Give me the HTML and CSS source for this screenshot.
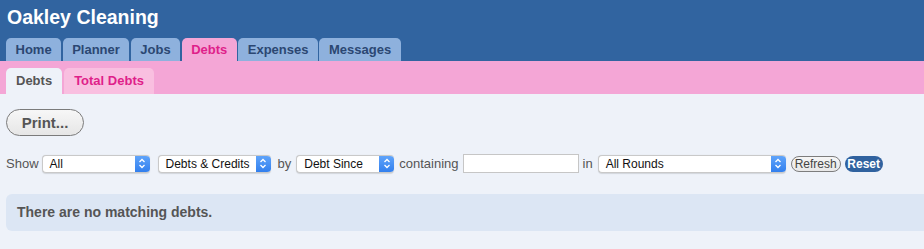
FILE: index.html
```html
<!DOCTYPE html>
<html>
<head>
<meta charset="utf-8">
<link rel="stylesheet" href="styles.css">
</head>
<body>
<div class="header">
  <h1 class="title">Oakley Cleaning</h1>
  <nav class="tabs">
    <a class="tab">Home</a>
    <a class="tab">Planner</a>
    <a class="tab">Jobs</a>
    <a class="tab active">Debts</a>
    <a class="tab">Expenses</a>
    <a class="tab">Messages</a>
  </nav>
</div>
<div class="subbar">
  <a class="subtab active">Debts</a>
  <a class="subtab">Total Debts</a>
</div>
<main class="content">
  <button class="print">Print...</button>
  <div class="filters">
    <span class="lbl">Show</span>
    <span class="sel sel-all"><span class="sel-text">All</span><span class="sel-arrow"><svg width="8" height="11" viewBox="0 0 8 11"><path d="M1.5 4 L4 1.5 L6.5 4 M1.5 7 L4 9.5 L6.5 7" fill="none" stroke="#fff" stroke-width="1.3"/></svg></span></span>
    <span class="sel sel-type"><span class="sel-text">Debts &amp; Credits</span><span class="sel-arrow"><svg width="8" height="11" viewBox="0 0 8 11"><path d="M1.5 4 L4 1.5 L6.5 4 M1.5 7 L4 9.5 L6.5 7" fill="none" stroke="#fff" stroke-width="1.3"/></svg></span></span>
    <span class="lbl">by</span>
    <span class="sel sel-by"><span class="sel-text">Debt Since</span><span class="sel-arrow"><svg width="8" height="11" viewBox="0 0 8 11"><path d="M1.5 4 L4 1.5 L6.5 4 M1.5 7 L4 9.5 L6.5 7" fill="none" stroke="#fff" stroke-width="1.3"/></svg></span></span>
    <span class="lbl">containing</span>
    <input class="search" type="text">
    <span class="lbl">in</span>
    <span class="sel sel-rounds"><span class="sel-text">All Rounds</span><span class="sel-arrow"><svg width="8" height="11" viewBox="0 0 8 11"><path d="M1.5 4 L4 1.5 L6.5 4 M1.5 7 L4 9.5 L6.5 7" fill="none" stroke="#fff" stroke-width="1.3"/></svg></span></span>
    <button class="refresh">Refresh</button>
    <button class="reset">Reset</button>
  </div>
  <div class="notice">There are no matching debts.</div>
</main>
</body>
</html>
```

FILE: styles.css
```css
html, body {
  margin: 0;
  padding: 0;
  overflow: hidden;
}
body {
  font-family: "Liberation Sans", Arial, Helvetica, sans-serif;
  background: #eef2f9;
  color: #555;
}
.header {
  background: #3164a0;
  padding: 6px 0 0 6px;
}
.title {
  margin: 0 0 9px 1px;
  font-size: 19.5px;
  line-height: 23px;
  font-weight: bold;
  color: #fff;
}
.tabs {
  display: flex;
  gap: 1.5px;
}
.tab {
  height: 23px;
  line-height: 24px;
  padding: 0 9.5px;
  background: #8eb1dd;
  color: #2b4772;
  border-radius: 5px 5px 0 0;
  font-size: 13px;
  font-weight: bold;
}
.tab.active {
  background: #f4a6d6;
  color: #df1f8a;
}
.subbar {
  background: #f4a6d6;
  padding: 7px 6px 0;
  display: flex;
  gap: 2px;
}
.subtab {
  height: 26px;
  line-height: 26px;
  padding: 0 10px;
  background: #f9bfe0;
  color: #df1f8a;
  border-radius: 5px 5px 0 0;
  font-size: 13px;
  font-weight: bold;
}
.subtab.active {
  background: #eef2f9;
  color: #555;
}
.content {
  padding: 15px 0 0 6px;
}
.print {
  display: block;
  width: 78px;
  height: 27px;
  box-sizing: border-box;
  border: 1px solid #7b7b7b;
  border-radius: 14px;
  background: linear-gradient(#f7f7f7, #e6e6e6);
  font-family: inherit;
  font-size: 15px;
  font-weight: bold;
  color: #555;
  padding: 0;
  margin: 0;
}
.filters {
  display: flex;
  align-items: center;
  gap: 5px;
  margin-top: 18px;
  height: 19px;
}
.lbl {
  font-size: 13px;
  color: #555;
}
.sel {
  display: inline-flex;
  align-items: stretch;
  height: 18px;
  box-sizing: border-box;
  border: 1px solid #c9c9c9;
  border-right: none;
  border-radius: 4px;
  background: #fff;
  box-shadow: 0 0.5px 1px rgba(0,0,0,0.12);
  overflow: hidden;
}
.sel + .sel {
  margin-left: 3px;
}
.sel-all { width: 108px; margin-left: -2px; }
.sel-type { width: 113px; margin-right: 2px; }
.sel-by { width: 98px; }
.sel-rounds { width: 188px; }
.sel-text {
  flex: 1;
  font-size: 12px;
  line-height: 16px;
  color: #111;
  padding-left: 7px;
  white-space: nowrap;
}
.sel-arrow {
  width: 15px;
  margin-top: -1px;
  margin-bottom: -1px;
  display: flex;
  align-items: center;
  justify-content: center;
  background: linear-gradient(#62a6fb, #2f7ded);
  border-radius: 0 4px 4px 0;
}
.search {
  width: 116px;
  height: 19px;
  box-sizing: border-box;
  border: 1px solid #c6c6c6;
  background: #fff;
  margin: 0 -1px;
  padding: 0 3px;
  font-size: 12px;
}
.refresh {
  height: 16px;
  width: 50px;
  box-sizing: border-box;
  border: 1px solid #7d7d7d;
  border-radius: 8px;
  background: linear-gradient(#f6f6f6, #e8e8e8);
  font-family: inherit;
  font-size: 12px;
  color: #444;
  padding: 0;
  margin: 1px 0 0 0;
  line-height: 14px;
}
.reset {
  height: 16px;
  width: 38px;
  box-sizing: border-box;
  border: none;
  border-radius: 8px;
  background: #30629f;
  font-family: inherit;
  font-size: 12px;
  font-weight: bold;
  color: #fff;
  padding: 0;
  margin: 0 0 0 -1px;
  line-height: 16px;
}
.notice {
  margin-top: 21px;
  margin-right: -10px;
  height: 37px;
  line-height: 37px;
  padding-left: 11px;
  border-radius: 6px;
  background: #dce6f4;
  font-size: 14px;
  font-weight: bold;
  color: #555;
}
```
